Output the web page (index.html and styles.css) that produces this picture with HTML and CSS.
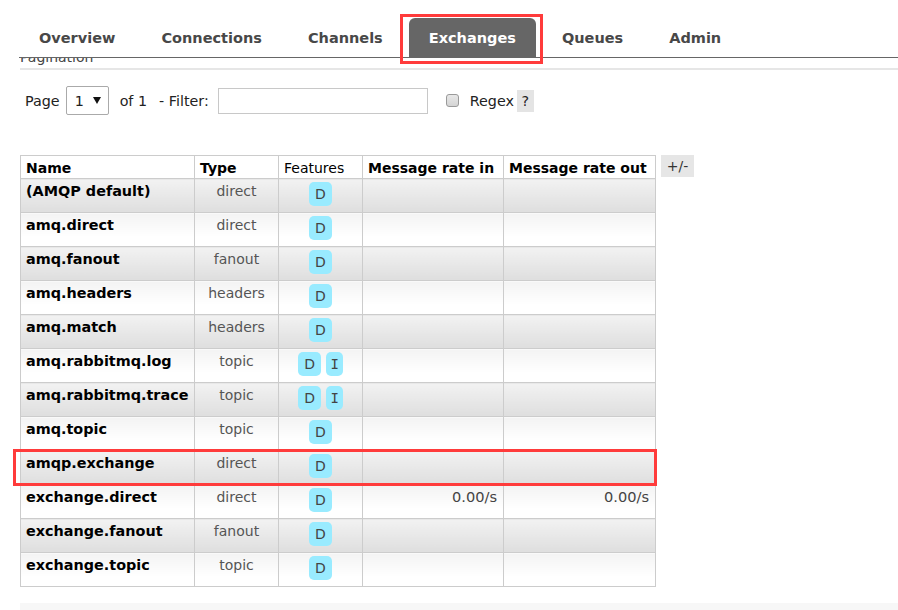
FILE: index.html
```html
<!DOCTYPE html>
<html>
<head>
<meta charset="utf-8">
<link rel="stylesheet" href="styles.css">
</head>
<body>
<div class="header">
  <nav class="tabs">
    <a class="tab">Overview</a>
    <a class="tab">Connections</a>
    <a class="tab">Channels</a>
    <a class="tab active">Exchanges<span class="mark-tab"></span></a>
    <a class="tab">Queues</a>
    <a class="tab">Admin</a>
  </nav>
</div>
<div class="pagination-title"><span>Pagination</span></div>
<div class="pager">
  <span class="lbl">Page</span>
  <span class="select"><span class="sel-val">1</span><svg class="caret" width="8" height="7" viewBox="0 0 8 7"><polygon points="0,0 8,0 4,7" fill="#111"/></svg></span>
  <span class="of">of 1</span>
  <span class="filter">- Filter:</span>
  <span class="input"></span>
  <span class="checkbox"></span>
  <span class="regex">Regex</span>
  <span class="help">?</span>
</div>
<div class="table-wrap">
  <table class="list">
    <thead>
      <tr>
        <th class="c-name">Name</th>
        <th class="c-type">Type</th>
        <th class="c-feat plain">Features</th>
        <th class="c-in">Message rate in</th>
        <th class="c-out">Message rate out</th>
      </tr>
    </thead>
    <tbody>
      <tr class="alt1"><td class="name">(AMQP default)</td><td class="type">direct</td><td class="feat"><span class="badge">D</span></td><td class="rate"></td><td class="rate"></td></tr>
      <tr class="alt2"><td class="name">amq.direct</td><td class="type">direct</td><td class="feat"><span class="badge">D</span></td><td class="rate"></td><td class="rate"></td></tr>
      <tr class="alt1"><td class="name">amq.fanout</td><td class="type">fanout</td><td class="feat"><span class="badge">D</span></td><td class="rate"></td><td class="rate"></td></tr>
      <tr class="alt2"><td class="name">amq.headers</td><td class="type">headers</td><td class="feat"><span class="badge">D</span></td><td class="rate"></td><td class="rate"></td></tr>
      <tr class="alt1"><td class="name">amq.match</td><td class="type">headers</td><td class="feat"><span class="badge">D</span></td><td class="rate"></td><td class="rate"></td></tr>
      <tr class="alt2"><td class="name">amq.rabbitmq.log</td><td class="type">topic</td><td class="feat"><span class="badge">D</span> <span class="badge serif">I</span></td><td class="rate"></td><td class="rate"></td></tr>
      <tr class="alt1"><td class="name">amq.rabbitmq.trace</td><td class="type">topic</td><td class="feat"><span class="badge">D</span> <span class="badge serif">I</span></td><td class="rate"></td><td class="rate"></td></tr>
      <tr class="alt2"><td class="name">amq.topic</td><td class="type">topic</td><td class="feat"><span class="badge">D</span></td><td class="rate"></td><td class="rate"></td></tr>
      <tr class="alt1"><td class="name marked">amqp.exchange<span class="mark-row"></span></td><td class="type">direct</td><td class="feat"><span class="badge">D</span></td><td class="rate"></td><td class="rate"></td></tr>
      <tr class="alt2"><td class="name">exchange.direct</td><td class="type">direct</td><td class="feat"><span class="badge">D</span></td><td class="rate">0.00/s</td><td class="rate">0.00/s</td></tr>
      <tr class="alt1"><td class="name">exchange.fanout</td><td class="type">fanout</td><td class="feat"><span class="badge">D</span></td><td class="rate"></td><td class="rate"></td></tr>
      <tr class="alt2"><td class="name">exchange.topic</td><td class="type">topic</td><td class="feat"><span class="badge">D</span></td><td class="rate"></td><td class="rate"></td></tr>
    </tbody>
  </table>
  <span class="toggle">+/-</span>
</div>
<div class="footer-strip"></div>
</body>
</html>
```
FILE: styles.css
```css
html, body {
  margin: 0;
  padding: 0;
  background: #fff;
  overflow: hidden;
}
body {
  font-family: "DejaVu Sans", Verdana, sans-serif;
  font-size: 14px;
  color: #333;
}

/* header / tabs */
.header {
  padding-top: 18px;
}
.tabs {
  display: flex;
  margin-left: 19px;
  border-bottom: 1px solid #666;
}
.tab {
  position: relative;
  display: block;
  height: 39px;
  line-height: 40px;
  padding: 0 20px;
  margin-right: 6px;
  font-weight: bold;
  font-size: 14.5px;
  color: #484848;
  border-radius: 6px 6px 0 0;
}
.tab.active {
  background: #666;
  color: #fff;
}
.mark-tab {
  position: absolute;
  top: -4px;
  left: -9px;
  right: -7px;
  bottom: -7px;
  border: 3px solid #ff3b3b;
}

/* partially hidden title */
.pagination-title {
  margin-left: 20px;
  height: 10px;
  overflow: hidden;
  border-bottom: 2px solid #e6e6e6;
}
.pagination-title span {
  display: block;
  margin-top: -9px;
  line-height: 17px;
  color: #444;
}

/* pager */
.pager {
  display: flex;
  align-items: center;
  margin-top: 16px;
  padding-left: 25px;
  color: #222;
  font-size: 14.3px;
}
.select {
  display: flex;
  align-items: center;
  box-sizing: border-box;
  width: 43px;
  height: 29px;
  margin-left: 6px;
  padding-left: 8px;
  border: 1px solid #aaa;
  border-radius: 2px;
}
.sel-val {
  width: 18px;
}
.caret {
  display: block;
}
.of {
  margin-left: 11px;
}
.filter {
  margin-left: 12px;
}
.input {
  display: block;
  box-sizing: border-box;
  width: 210px;
  height: 26px;
  margin-left: 9px;
  border: 1px solid #c8c8c8;
  background: #fff;
}
.checkbox {
  display: block;
  box-sizing: border-box;
  width: 13px;
  height: 13px;
  margin-left: 18px;
  border: 1px solid #9a9a9a;
  border-radius: 3px;
  background: linear-gradient(#e8e8e8, #d4d4d4);
}
.regex {
  margin-left: 11px;
}
.help {
  display: block;
  width: 17px;
  height: 22px;
  line-height: 22px;
  margin-left: 3px;
  text-align: center;
  background: #e4e4e4;
}

/* table */
.table-wrap {
  display: flex;
  align-items: flex-start;
  gap: 5px;
  margin: 40px 0 0 20px;
}
.list {
  border-collapse: collapse;
  table-layout: fixed;
  width: 636px;
  border: 1px solid #ccc;
}
.list th {
  box-sizing: border-box;
  height: 23px;
  padding: 1px 5px 0;
  text-align: left;
  font-weight: bold;
  color: #000;
  background: #fff;
  border: 1px solid #ccc;
  white-space: nowrap;
  line-height: 18px;
}
.list th.plain {
  font-weight: normal;
}
.c-name { width: 174px; }
.c-type { width: 84px; }
.c-feat { width: 84px; }
.c-in { width: 141px; }
.c-out { width: 152px; }

.list td {
  box-sizing: border-box;
  height: 34px;
  padding: 3px 5px 0;
  vertical-align: top;
  border: 1px solid #ccc;
  line-height: 18px;
  white-space: nowrap;
}
.alt1 td {
  background: linear-gradient(#f2f2f2, #dedede);
}
.alt2 td {
  background: linear-gradient(#f3f3f3, #fff 70%);
}
.list td.name {
  font-weight: bold;
  font-size: 14.4px;
  color: #000;
}
.list td.type {
  text-align: center;
  color: #555;
}
.list td.feat {
  text-align: center;
  padding-left: 0;
  padding-right: 0;
}
.list td.rate {
  text-align: right;
  color: #444;
  padding-right: 6px;
  font-size: 14.6px;
}
.badge {
  display: inline-block;
  height: 24px;
  line-height: 25px;
  padding: 0 6.5px;
  border-radius: 5px;
  background: #99ebff;
  color: #444;
  font-weight: normal;
}
.badge.serif {
  font-family: "DejaVu Sans Mono", monospace;
  padding: 0 4.5px;
}
.list td.marked {
  position: relative;
}
.mark-row {
  position: absolute;
  top: -2px;
  left: -8px;
  width: 644px;
  height: 37px;
  box-sizing: border-box;
  border: 3px solid #ff3b3b;
}
.toggle {
  display: block;
  width: 33px;
  height: 22px;
  line-height: 22px;
  text-align: center;
  background: #e6e6e6;
  color: #333;
}

.footer-strip {
  margin: 16px 0 0 20px;
  height: 8px;
  background: #f7f7f7;
}
```
